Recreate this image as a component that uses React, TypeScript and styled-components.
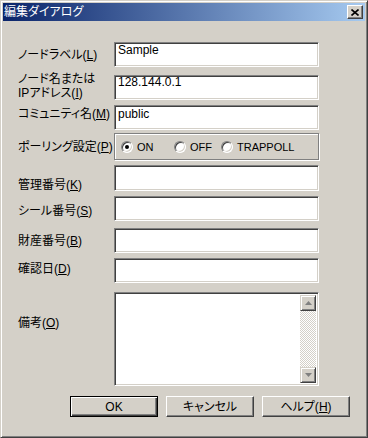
import React from "react";
import styled, { createGlobalStyle } from "styled-components";

const GlobalStyle = createGlobalStyle`
  html, body {
    margin: 0;
    padding: 0;
    background: #d4d0c8;
  }
  * {
    box-sizing: border-box;
  }
`;

const FONT = `"Liberation Sans", "Noto Sans CJK JP", sans-serif`;

const Window = styled.div`
  width: 368px;
  height: 438px;
  background: #d4d0c8;
  border: 1px solid;
  border-color: #d4d0c8 #404040 #404040 #d4d0c8;
  box-shadow: inset 1px 1px 0 #fff, inset -1px -1px 0 #808080;
  padding: 2px;
  display: flex;
  flex-direction: column;
  font-family: ${FONT};
  font-size: 12px;
  color: #000;
  font-feature-settings: "palt";
`;

const TitleBar = styled.div`
  height: 18px;
  flex-shrink: 0;
  display: flex;
  align-items: center;
  justify-content: space-between;
  padding: 0 2px 0 1px;
  background: linear-gradient(to right, #0a246a, #a6caf0);
`;

const TitleText = styled.span`
  color: #fff;
  font-size: 12px;
  line-height: 12px;
`;

const CloseButton = styled.div`
  width: 16px;
  height: 14px;
  background: #d4d0c8;
  border: 1px solid;
  border-color: #fff #404040 #404040 #fff;
  box-shadow: inset -1px -1px 0 #808080;
  display: flex;
  align-items: center;
  justify-content: center;
`;

const Body = styled.div`
  padding-left: 15px;
  display: flex;
  flex-direction: column;
`;

const Row = styled.div<{ $mt: number; $h: number }>`
  display: grid;
  grid-template-columns: 96px 205px;
  margin-top: ${(p) => p.$mt}px;
  height: ${(p) => p.$h}px;
`;

const Label = styled.div<{ $top: number; $lh?: number }>`
  margin-top: ${(p) => p.$top}px;
  line-height: ${(p) => p.$lh ?? 12}px;
  font-size: 12px;
  white-space: nowrap;
`;

const U = styled.span`
  text-decoration: underline;
  text-underline-offset: 1px;
`;

const Field = styled.div<{ $pt?: number }>`
  height: 100%;
  background: #fff;
  border: 1px solid;
  border-color: #808080 #fff #fff #808080;
  box-shadow: inset 1px 1px 0 #404040, inset -1px -1px 0 #d4d0c8;
  padding: ${(p) => p.$pt ?? 1}px 3px 0;
  font-size: 12px;
  line-height: 13px;
  font-feature-settings: normal;
`;

const Memo = styled(Field)`
  display: flex;
  justify-content: flex-end;
  padding: 2px;
`;

const ScrollBar = styled.div`
  width: 16px;
  display: flex;
  flex-direction: column;
  justify-content: space-between;
  background: repeating-conic-gradient(#d4d0c8 0 25%, #fff 0 50%) 0 0 / 2px 2px;
`;

const ScrollButton = styled.div`
  width: 16px;
  height: 16px;
  background: #d4d0c8;
  border: 1px solid;
  border-color: #d4d0c8 #404040 #404040 #d4d0c8;
  box-shadow: inset 1px 1px 0 #fff, inset -1px -1px 0 #808080;
  display: flex;
  align-items: center;
  justify-content: center;
`;

const Group = styled.div`
  height: 100%;
  border: 1px solid #808080;
  box-shadow: 1px 1px 0 #fff, inset 1px 1px 0 #fff;
  display: flex;
  align-items: center;
  padding-left: 6px;
`;

const Option = styled.div<{ $w?: number }>`
  display: flex;
  align-items: center;
  gap: 4px;
  width: ${(p) => (p.$w ? `${p.$w}px` : "auto")};
  font-size: 11px;
  line-height: 12px;
`;

const Radio = styled.span<{ $checked?: boolean }>`
  width: 12px;
  height: 12px;
  border-radius: 50%;
  background: #fff;
  border: 1px solid;
  border-color: #808080 #fff #fff #808080;
  box-shadow: inset 1px 1px 0 #404040, inset -1px -1px 0 #d4d0c8;
  display: flex;
  align-items: center;
  justify-content: center;
  &::after {
    content: "";
    width: 4px;
    height: 4px;
    border-radius: 50%;
    background: ${(p) => (p.$checked ? "#000" : "transparent")};
  }
`;

const ButtonRow = styled.div`
  display: flex;
  gap: 8px;
  margin-top: 10px;
  padding-left: 52px;
`;

const Button = styled.div<{ $default?: boolean }>`
  width: 88px;
  height: 21px;
  display: flex;
  align-items: center;
  justify-content: center;
  background: #d4d0c8;
  border: 1px solid;
  border-color: ${(p) => (p.$default ? "#000" : "#fff #404040 #404040 #fff")};
  box-shadow: ${(p) =>
    p.$default
      ? "inset 1px 1px 0 #fff, inset -1px -1px 0 #404040, inset -2px -2px 0 #808080"
      : "inset -1px -1px 0 #808080"};
  font-size: 12px;
  line-height: 12px;
`;

const Arrow = ({ up }: { up?: boolean }) => (
  <svg width="7" height="4" viewBox="0 0 7 4">
    <polygon points={up ? "3.5,0 7,4 0,4" : "0,0 7,0 3.5,4"} fill="#808080" />
  </svg>
);

export default function App() {
  return (
    <>
      <GlobalStyle />
      <Window>
        <TitleBar>
          <TitleText>編集ダイアログ</TitleText>
          <CloseButton>
            <svg width="8" height="7" viewBox="0 0 8 7">
              <path d="M0.5 0.5 L7.5 6.5 M7.5 0.5 L0.5 6.5" stroke="#000" strokeWidth="1.6" />
            </svg>
          </CloseButton>
        </TitleBar>
        <Body>
          <Row $mt={21} $h={25}>
            <Label $top={7}>
              ノードラベル(<U>L</U>)
            </Label>
            <Field>Sample</Field>
          </Row>
          <Row $mt={8} $h={25}>
            <Label $top={-3} $lh={14}>
              ノード名または
              <br />
              IPアドレス(<U>I</U>)
            </Label>
            <Field $pt={0}>128.144.0.1</Field>
          </Row>
          <Row $mt={5} $h={25}>
            <Label $top={3}>
              コミュニティ名(<U>M</U>)
            </Label>
            <Field $pt={2}>public</Field>
          </Row>
          <Row $mt={3} $h={27}>
            <Label $top={8}>
              ポーリング設定(<U>P</U>)
            </Label>
            <Group>
              <Option $w={53}>
                <Radio $checked />
                ON
              </Option>
              <Option $w={47}>
                <Radio />
                OFF
              </Option>
              <Option>
                <Radio />
                TRAPPOLL
              </Option>
            </Group>
          </Row>
          <Row $mt={5} $h={25}>
            <Label $top={14}>
              管理番号(<U>K</U>)
            </Label>
            <Field />
          </Row>
          <Row $mt={6} $h={25}>
            <Label $top={9}>
              シール番号(<U>S</U>)
            </Label>
            <Field />
          </Row>
          <Row $mt={7} $h={25}>
            <Label $top={7}>
              財産番号(<U>B</U>)
            </Label>
            <Field />
          </Row>
          <Row $mt={5} $h={25}>
            <Label $top={5}>
              確認日(<U>D</U>)
            </Label>
            <Field />
          </Row>
          <Row $mt={9} $h={94}>
            <Label $top={25}>
              備考(<U>O</U>)
            </Label>
            <Memo>
              <ScrollBar>
                <ScrollButton>
                  <Arrow up />
                </ScrollButton>
                <ScrollButton>
                  <Arrow />
                </ScrollButton>
              </ScrollBar>
            </Memo>
          </Row>
          <ButtonRow>
            <Button $default>OK</Button>
            <Button>キャンセル</Button>
            <Button>
              ヘルプ(<U>H</U>)
            </Button>
          </ButtonRow>
        </Body>
      </Window>
    </>
  );
}
